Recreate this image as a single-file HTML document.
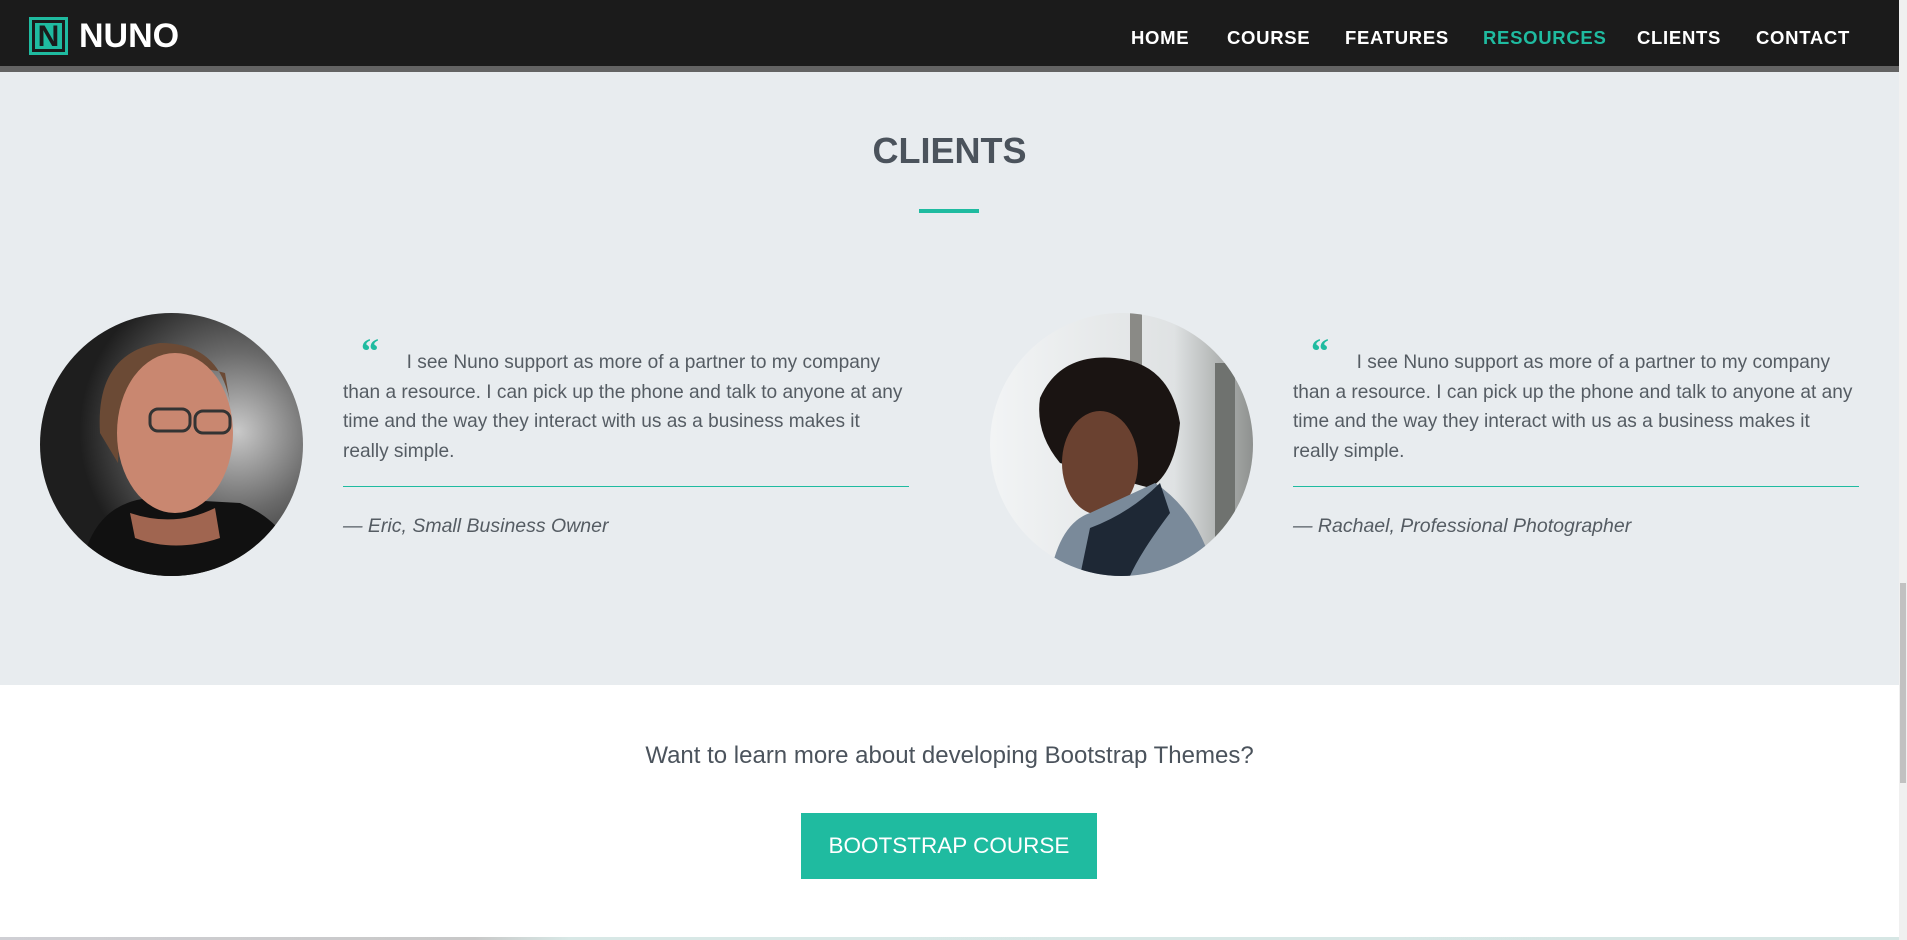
<!DOCTYPE html>
<html><head><meta charset="utf-8"><style>
*{margin:0;padding:0;box-sizing:border-box}
body{width:1907px;height:940px;overflow:hidden;background:#fff;font-family:"Liberation Sans",sans-serif;position:relative}
.nav{position:absolute;left:0;top:0;width:1899px;height:66px;background:#1b1b1b}
.stripe{position:absolute;left:0;top:66px;width:1899px;height:6px;background:#636363}
.logo{position:absolute;left:29px;top:17px;width:39px;height:38px;border:3px solid #1fbba0;background:#1b1b1b}
.logo i{position:absolute;left:3px;top:3px;right:3px;bottom:3px;background:#1fbba0;color:#1b1b1b;font:bold 30px/27px "Liberation Sans",sans-serif;font-style:normal;text-align:center}
.brand{position:absolute;left:79px;top:17px;color:#fff;font-size:34px;font-weight:bold;letter-spacing:0}
.menu a{position:absolute;top:27px;color:#fff;font-size:18.5px;font-weight:bold;letter-spacing:0.7px;text-decoration:none}
.gray{position:absolute;left:0;top:72px;width:1899px;height:613px;background:#e8ecef}
h2{position:absolute;left:0;width:1899px;top:130px;text-align:center;font-size:36px;color:#4b535c;font-weight:bold}
.bar{position:absolute;left:919px;top:209px;width:60px;height:4px;background:#1fbba0}
.circ{position:absolute;top:313px;width:263px;height:263px;border-radius:50%;overflow:hidden}
.q{position:absolute;color:#1fbba0;font:bold 36px/1 "Liberation Serif",serif}
.txt{position:absolute;color:#555c63;font-size:19.1px;line-height:29.6px;white-space:nowrap}
.hr{position:absolute;top:486px;height:1px;background:#1fbba0;width:566px}
.att{position:absolute;top:515px;color:#555c63;font-size:19.5px;font-style:italic}
.want{position:absolute;top:742px;left:0;width:1899px;text-align:center;font-size:24px;color:#4b535c}
.btn{position:absolute;left:801px;top:813px;width:296px;height:66px;background:#1fbba0;color:#fff;font-size:22.5px;text-align:center;line-height:66px}
.sb{position:absolute;left:1899px;top:0;width:8px;height:940px;background:#f0f0f0}
.thumb{position:absolute;left:1900px;top:583px;width:6px;height:200px;background:#c1c1c1}
.bot{position:absolute;left:0;top:937px;width:1899px;height:3px;background:linear-gradient(90deg,#cfcfd4 0,#c8c8c8 25%,#d8e8e6 30%,#d6e6e4 100%)}
</style></head><body>
<div class="nav"></div><div class="stripe"></div>
<div class="logo"><i>N</i></div>
<div class="brand">NUNO</div>
<div class="menu">
<a style="left:1131px">HOME</a>
<a style="left:1227px">COURSE</a>
<a style="left:1345px">FEATURES</a>
<a style="left:1483px;color:#1fbba0">RESOURCES</a>
<a style="left:1637px">CLIENTS</a>
<a style="left:1756px">CONTACT</a>
</div>
<div class="gray"></div>
<h2>CLIENTS</h2>
<div class="bar"></div>

<div class="circ" style="left:40px">
<svg width="263" height="263" viewBox="0 0 263 263">
<defs><radialGradient id="g1" cx="0.75" cy="0.45" r="0.6"><stop offset="0" stop-color="#c9c9c9"/><stop offset="0.5" stop-color="#6a6a6a"/><stop offset="1" stop-color="#1e1e1e"/></radialGradient></defs>
<rect width="263" height="263" fill="url(#g1)"/>
<path d="M40 263 Q50 190 110 185 L200 190 Q250 210 263 263Z" fill="#111"/>
<path d="M60 120 Q55 40 120 30 Q180 30 190 90 L185 60 Q150 50 110 60 Q80 80 78 150Z" fill="#6b4a35"/>
<ellipse cx="135" cy="120" rx="58" ry="80" fill="#c98770"/>
<path d="M90 200 Q135 215 175 195 L180 225 Q135 240 95 225Z" fill="#a06550"/>
<rect x="110" y="96" width="40" height="22" rx="8" fill="none" stroke="#333" stroke-width="3"/>
<rect x="155" y="98" width="35" height="22" rx="8" fill="none" stroke="#333" stroke-width="3"/>
</svg></div>

<div class="circ" style="left:990px">
<svg width="263" height="263" viewBox="0 0 263 263">
<defs><linearGradient id="g2" x1="0" x2="1"><stop offset="0" stop-color="#f2f4f5"/><stop offset="0.7" stop-color="#dfe2e3"/><stop offset="1" stop-color="#8e918f"/></linearGradient></defs>
<rect width="263" height="263" fill="url(#g2)"/>
<rect x="140" y="0" width="12" height="120" fill="#8a8a86"/>
<rect x="225" y="50" width="20" height="200" fill="#6f726f"/>
<path d="M50 85 Q70 40 125 45 Q180 50 190 110 Q185 160 160 175 L70 150 Q45 120 50 85Z" fill="#1a1412"/>
<ellipse cx="110" cy="150" rx="38" ry="52" fill="#6a4130"/>
<path d="M60 263 Q70 210 100 200 L165 170 Q210 200 225 263Z" fill="#7a8a9a"/>
<path d="M90 263 L100 215 Q140 200 170 170 L180 200 Q150 240 140 263Z" fill="#1e2835"/>
</svg></div>

<div class="q" style="left:361px;top:333px">“</div>
<div class="txt" style="left:343px;top:348px">&nbsp;&nbsp;&nbsp;&nbsp;&nbsp;&nbsp;&nbsp;&nbsp;&nbsp;&nbsp;&nbsp;&nbsp;I see Nuno support as more of a partner to my company<br>than a resource. I can pick up the phone and talk to anyone at any<br>time and the way they interact with us as a business makes it<br>really simple.</div>
<div class="hr" style="left:343px"></div>
<div class="att" style="left:343px">— Eric, Small Business Owner</div>

<div class="q" style="left:1311px;top:333px">“</div>
<div class="txt" style="left:1293px;top:348px">&nbsp;&nbsp;&nbsp;&nbsp;&nbsp;&nbsp;&nbsp;&nbsp;&nbsp;&nbsp;&nbsp;&nbsp;I see Nuno support as more of a partner to my company<br>than a resource. I can pick up the phone and talk to anyone at any<br>time and the way they interact with us as a business makes it<br>really simple.</div>
<div class="hr" style="left:1293px"></div>
<div class="att" style="left:1293px">— Rachael, Professional Photographer</div>

<div class="want">Want to learn more about developing Bootstrap Themes?</div>
<div class="btn">BOOTSTRAP COURSE</div>
<div class="bot"></div>
<div class="sb"></div><div class="thumb"></div>
</body></html>
